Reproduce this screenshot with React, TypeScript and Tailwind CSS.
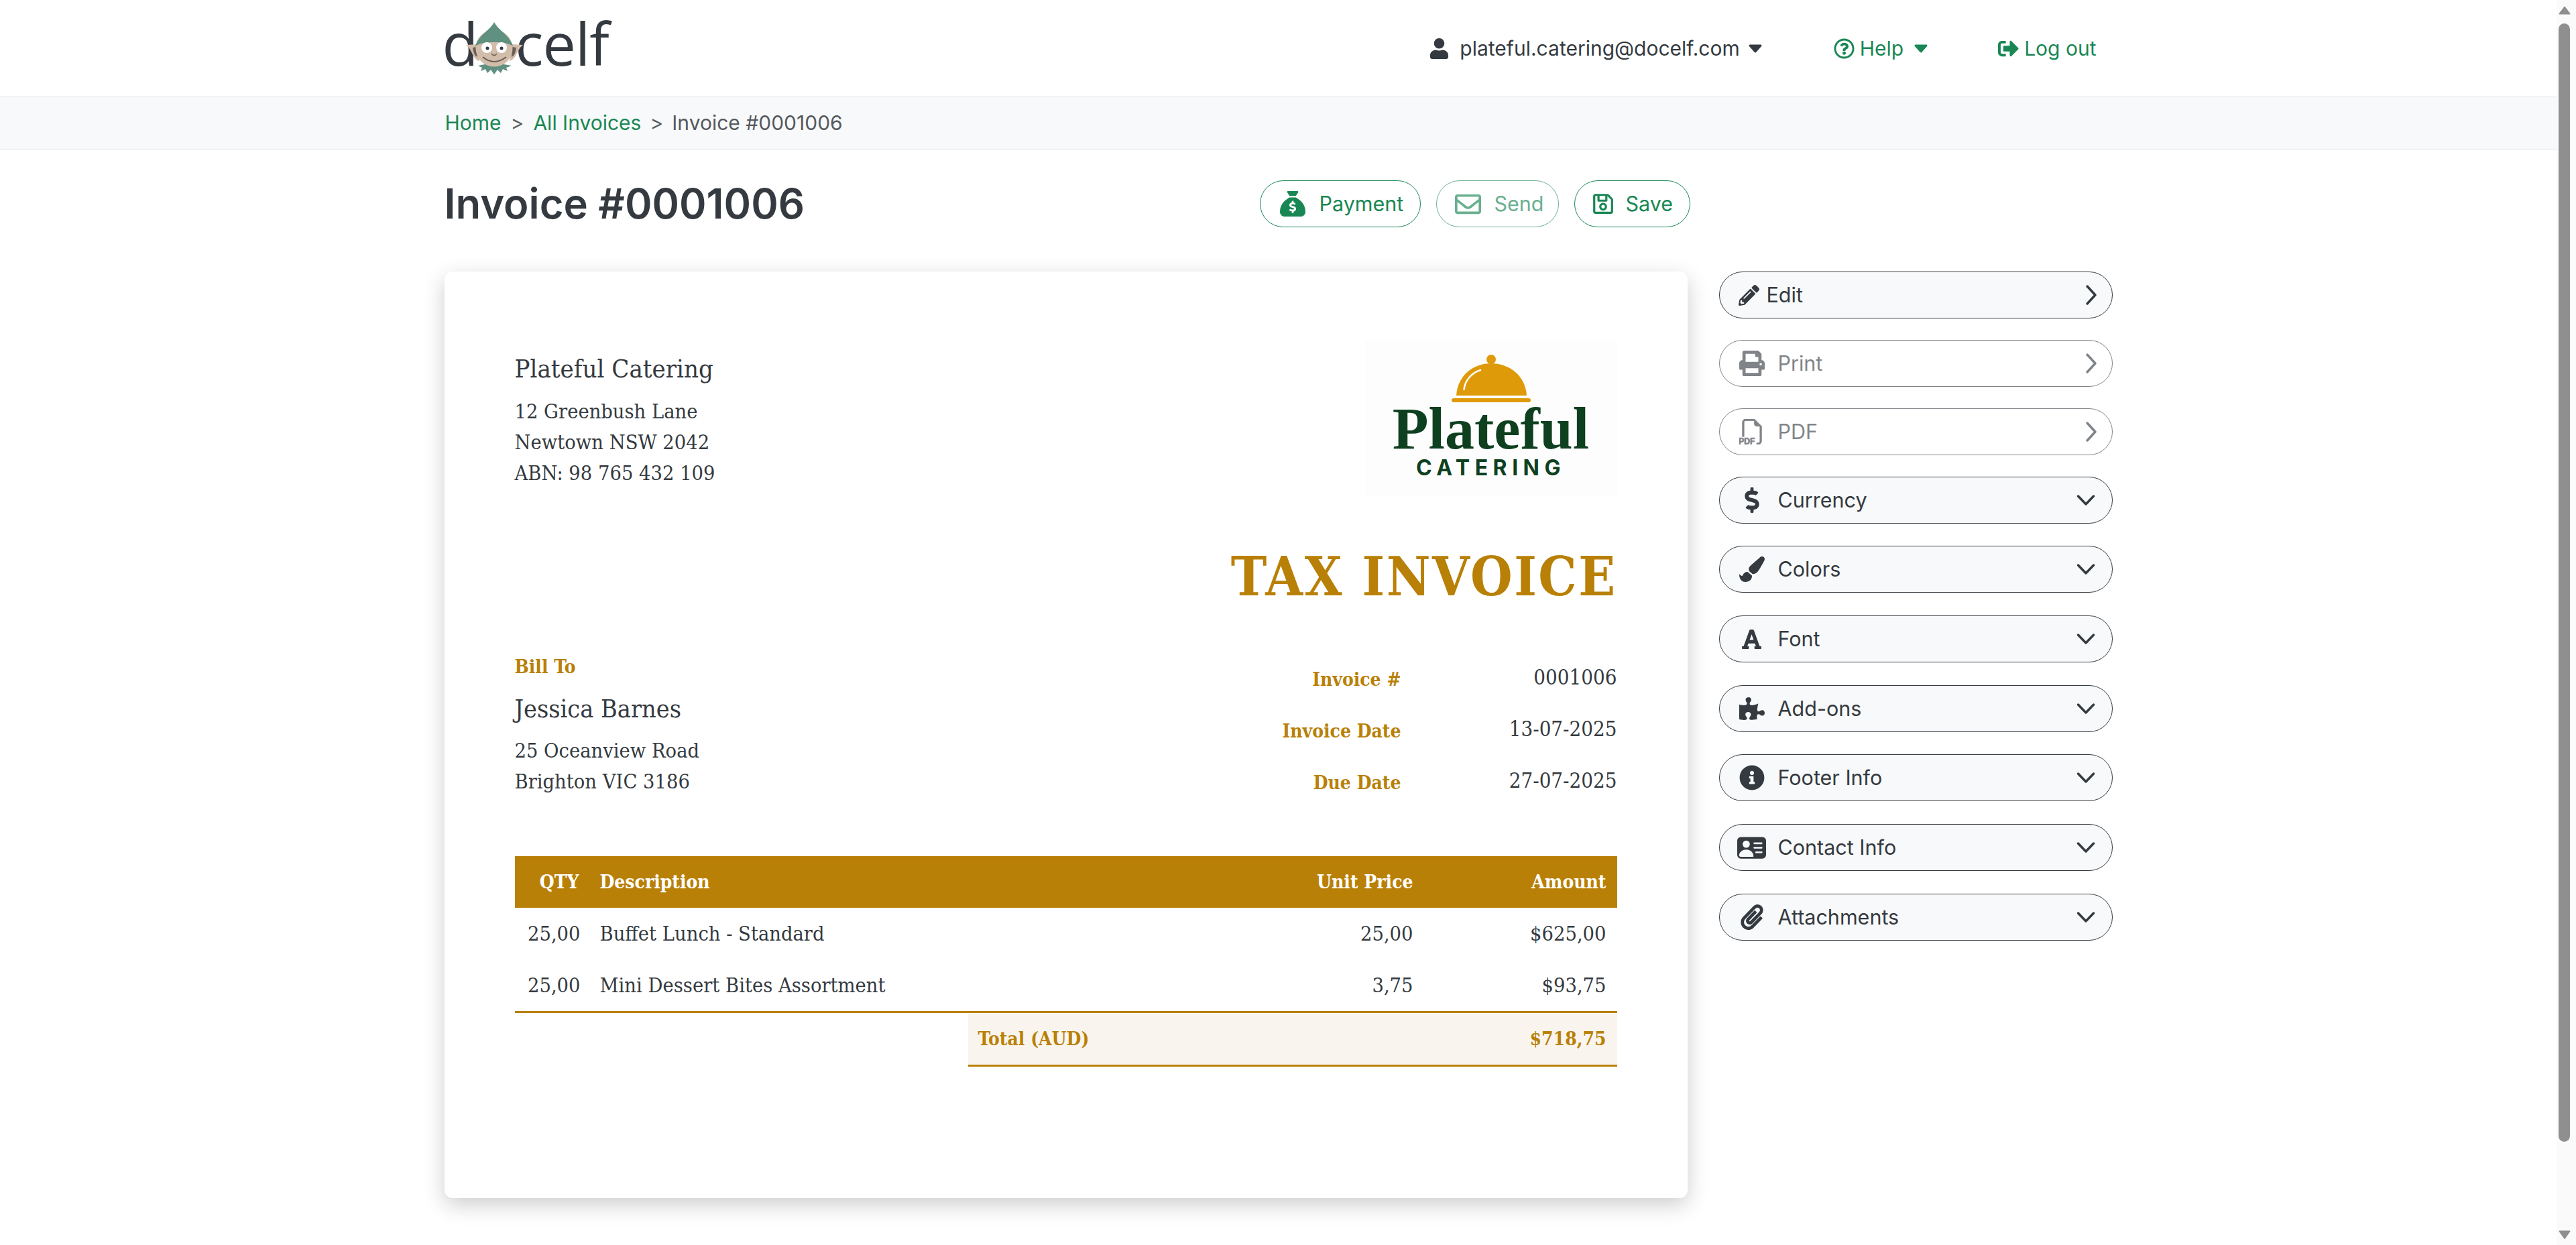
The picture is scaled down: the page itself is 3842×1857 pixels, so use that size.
import React from "react";
import { FaUser, FaRegQuestionCircle, FaSignOutAlt, FaRegEnvelope, FaRegSave, FaPencilAlt, FaPrint, FaDollarSign, FaPaintBrush, FaFont, FaPuzzlePiece, FaInfoCircle, FaPaperclip } from "react-icons/fa";
import { FaSackDollar } from "react-icons/fa6";
import { BsFiletypePdf, BsPersonVcardFill } from "react-icons/bs";

const Caret = () => (
  <svg width="20" height="13" viewBox="0 0 20 13" className="shrink-0">
    <path d="M2 2 L18 2 L10 11 Z" fill="currentColor" stroke="currentColor" strokeWidth="3" strokeLinejoin="round" />
  </svg>
);

const Elf = () => (
  <svg width="85" height="78" viewBox="0 0 85 78" className="relative z-10 -ml-[17px] -mr-[12px] shrink-0 self-start mt-[33px]">
    <path d="M18 65 L28 63 L57 63 L68 65 L60 68 L62 73 L55 70 L52 76 L47 71 L42 78 L37 71 L32 76 L29 70 L22 73 L24 68Z" fill="#5f9080" />
    <path d="M0 34 L20 33 L20 58 C10 56 9 40 0 34Z" fill="#d2bcaa" />
    <path d="M85 34 L65 33 L65 58 C75 56 76 40 85 34Z" fill="#d2bcaa" />
    <path d="M10 38 L16 37 L17 52 C12 50 11 44 10 38Z" fill="#6b5f55" />
    <path d="M75 38 L69 37 L68 52 C73 50 74 44 75 38Z" fill="#6b5f55" />
    <circle cx="42" cy="39" r="27.5" fill="#d2bcaa" />
    <path d="M42 0 C36 12 18 20 14 36 C22 28 62 28 70 36 C66 20 48 12 42 0 Z" fill="#5f9080" />
    <circle cx="31" cy="38" r="8" fill="#fff" />
    <circle cx="53" cy="38" r="8" fill="#fff" />
    <circle cx="32" cy="39" r="2.5" fill="#343a40" />
    <circle cx="53" cy="39" r="2.5" fill="#343a40" />
    <path d="M38 47 Q42 52 46 47" fill="none" stroke="#6b5f55" strokeWidth="1.5" />
    <path d="M25 52 Q42 66 60 52" fill="none" stroke="#6b5f55" strokeWidth="2" />
  </svg>
);

const Cloche = () => (
  <svg width="118" height="71" viewBox="0 0 118 71" className="block">
    <circle cx="59" cy="7" r="7" fill="#df9a0a" />
    <path d="M7 61 C9 30 33 13 59 13 C85 13 110 30 112 61 Z" fill="#df9a0a" />
    <rect x="0" y="65" width="118" height="6" rx="3" fill="#df9a0a" />
    <path d="M18.5 52 C20 38 30 27 43 23" fill="none" stroke="#fff" strokeWidth="2.5" strokeLinecap="round" />
  </svg>
);

const ChevronRight = () => (
  <svg width="18" height="32" viewBox="0 0 18 32" className="mr-[2px]">
    <path d="M3 3 L15 16 L3 29" fill="none" stroke="currentColor" strokeWidth="3.5" strokeLinecap="round" strokeLinejoin="round" />
  </svg>
);
const ChevronDown = () => (
  <svg width="28" height="18" viewBox="0 0 28 18" className="mr-[5px]">
    <path d="M2.5 3 L14 15 L25.5 3" fill="none" stroke="currentColor" strokeWidth="3.5" strokeLinecap="round" strokeLinejoin="round" />
  </svg>
);

type Side = { label: string; icon: React.ReactNode; kind: "right" | "down"; disabled?: boolean; narrow?: boolean; gap: string };
const side: Side[] = [
  { label: "Edit", icon: <FaPencilAlt size={31} />, kind: "right", narrow: true, gap: "mb-[32px]" },
  { label: "Print", icon: <FaPrint size={38} />, kind: "right", disabled: true, gap: "mb-[32px]" },
  { label: "PDF", icon: <BsFiletypePdf size={38} stroke="currentColor" strokeWidth={0.35} />, kind: "right", disabled: true, gap: "mb-[32px]" },
  { label: "Currency", icon: <FaDollarSign size={38} />, kind: "down", gap: "mb-[33px]" },
  { label: "Colors", icon: <FaPaintBrush size={38} />, kind: "down", gap: "mb-[34px]" },
  { label: "Font", icon: <FaFont size={33} />, kind: "down", gap: "mb-[34px]" },
  { label: "Add-ons", icon: <FaPuzzlePiece size={38} />, kind: "down", gap: "mb-[33px]" },
  { label: "Footer Info", icon: <FaInfoCircle size={38} />, kind: "down", gap: "mb-[34px]" },
  { label: "Contact Info", icon: <BsPersonVcardFill size={43} />, kind: "down", gap: "mb-[34px]" },
  { label: "Attachments", icon: <FaPaperclip size={38} />, kind: "down", gap: "" },
];

const serif = "font-['DejaVu_Serif_Condensed','DejaVu_Serif',serif]";

export default function App() {
  return (
    <div className="flex h-screen w-screen overflow-hidden bg-white text-[#343a40] font-['Inter',sans-serif]">
      <div className="flex-1 min-w-0">
        <header className="h-[145px] border-b border-[#dfe2e6]">
          <div className="mx-auto flex h-full w-[2488px] items-start justify-between">
            <div className="-ml-[3px] flex items-start text-[88px] font-medium leading-[88px] font-['Open_Sans',sans-serif] tracking-[-1px]">
              <span className="mt-[20px]">d</span>
              <Elf />
              <span className="mt-[20px]">celf</span>
            </div>
            <nav className="flex h-[144px] items-center pr-[24px] text-[30px]">
              <FaUser className="mr-[15px]" size={31} />
              <span>plateful.catering@docelf.com</span>
              <span className="ml-[13px]"><Caret /></span>
              <span className="ml-[107px] flex items-center text-[#198754]">
                <FaRegQuestionCircle className="mr-[8px]" size={31} />
                <span>Help</span>
                <span className="ml-[16px]"><Caret /></span>
              </span>
              <span className="ml-[105px] flex items-center text-[#198754]">
                <FaSignOutAlt className="mr-[8px]" size={31} />
                <span>Log out</span>
              </span>
            </nav>
          </div>
        </header>

        <div className="h-[78px] border-b border-[#dfe2e6] bg-[#f8f9fa]">
          <div className="mx-auto flex h-full w-[2488px] items-center pl-[1px] text-[30px]">
            <span className="text-[#198754]">Home</span>
            <span className="mx-[14px] text-[#5c5f63]">&gt;</span>
            <span className="text-[#198754]">All Invoices</span>
            <span className="mx-[13px] text-[#5c5f63]">&gt;</span>
            <span className="text-[#55595e]">Invoice #0001006</span>
          </div>
        </div>

        <div className="mx-auto w-[2488px]">
          <div className="flex h-[182px] w-[1858px] items-center justify-between pb-[20px]">
            <h1 className="text-[61.5px] font-semibold leading-none">Invoice #0001006</h1>
            <div className="flex items-center gap-[23px] text-[30.5px] text-[#198754]">
              <button className="flex h-[70px] w-[240px] items-center rounded-full border border-[#198754] pl-[29px]">
                <FaSackDollar size={38} className="mr-[21px]" />
                <span>Payment</span>
              </button>
              <button className="flex h-[70px] w-[183px] items-center rounded-full border border-[#198754] pl-[27px] opacity-65">
                <FaRegEnvelope size={39} className="mr-[20px]" />
                <span>Send</span>
              </button>
              <button className="flex h-[70px] w-[173px] items-center rounded-full border border-[#198754] pl-[25px]">
                <FaRegSave size={34} className="mr-[17px]" />
                <span>Save</span>
              </button>
            </div>
          </div>

          <div className="flex items-start">
            <main className={`h-[1382px] w-[1854px] rounded-[12px] bg-white px-[105px] pt-[104px] shadow-[0_10px_32px_rgba(0,0,0,0.2)] ${serif}`}>
              <div className="flex items-start justify-between">
                <div className="pt-[18px]">
                  <div className="text-[38px] leading-[46px]">Plateful Catering</div>
                  <div className="mt-[18px] text-[30.5px] leading-[46px]">
                    <div>12 Greenbush Lane</div>
                    <div>Newtown NSW 2042</div>
                    <div>ABN: 98 765 432 109</div>
                  </div>
                </div>
                <div className="flex h-[231px] w-[376px] flex-col items-center bg-[#fdfdfd] pt-[20px]">
                  <Cloche />
                  <div className="font-['Liberation_Serif',serif] mt-[2px] text-[88px] font-bold leading-[76px] text-[#0e4020]">Plateful</div>
                  <div className="font-['Inter',sans-serif] text-[32px] font-bold leading-[40px] tracking-[7.5px] text-[#0e4020]">CATERING</div>
                </div>
              </div>

              <div className="mt-[72px] text-right text-[80px] font-bold leading-[96px] tracking-[2.5px] text-[#b98007]">TAX INVOICE</div>

              <div className="mt-[67px] flex items-start justify-between">
                <div>
                  <div className="text-[28px] font-bold leading-[40px] text-[#b98007]">Bill To</div>
                  <div className="mt-[19px] text-[37.5px] leading-[46px]">Jessica Barnes</div>
                  <div className="mt-[17px] text-[30.5px] leading-[46px]">
                    <div>25 Oceanview Road</div>
                    <div>Brighton VIC 3186</div>
                  </div>
                </div>
                <div className="grid w-[500px] grid-cols-[178px_1fr] gap-y-[36px] pt-[18px] text-[28px] leading-[41px]">
                  <div className="text-right font-bold text-[#b98007]">Invoice #</div>
                  <div className="-mt-[3px] text-right text-[31px]">0001006</div>
                  <div className="whitespace-nowrap text-right font-bold text-[#b98007]">Invoice Date</div>
                  <div className="-mt-[3px] text-right text-[31px]">13-07-2025</div>
                  <div className="text-right font-bold text-[#b98007]">Due Date</div>
                  <div className="-mt-[3px] text-right text-[31px]">27-07-2025</div>
                </div>
              </div>

              <table className="mt-[88px] w-full table-fixed border-collapse text-[30.5px]">
                <colgroup>
                  <col className="w-[113px]" />
                  <col />
                  <col className="w-[300px]" />
                  <col className="w-[289px]" />
                </colgroup>
                <thead>
                  <tr className="h-[77px] bg-[#b98007] text-[28px] text-white">
                    <th className="pr-[17px] text-right font-bold">QTY</th>
                    <th className="pl-[14px] text-left font-bold">Description</th>
                    <th className="pr-[15px] text-right font-bold">Unit Price</th>
                    <th className="pr-[16px] text-right font-bold">Amount</th>
                  </tr>
                </thead>
                <tbody>
                  <tr className="h-[77px]">
                    <td className="pr-[15px] text-right">25,00</td>
                    <td className="pl-[14px]">Buffet Lunch - Standard</td>
                    <td className="pr-[15px] text-right">25,00</td>
                    <td className="pr-[16px] text-right">$625,00</td>
                  </tr>
                  <tr className="h-[77px]">
                    <td className="pr-[15px] text-right">25,00</td>
                    <td className="pl-[14px]">Mini Dessert Bites Assortment</td>
                    <td className="pr-[15px] text-right">3,75</td>
                    <td className="pr-[16px] text-right">$93,75</td>
                  </tr>
                </tbody>
              </table>
              <div className="h-[3px] bg-[#b98007]" />
              <div className="ml-auto flex h-[80px] w-[968px] items-center justify-between border-b-[3px] border-[#b98007] bg-[#f9f5ee] pl-[15px] pr-[16px] text-[28px] font-bold text-[#b98007]">
                <span>Total (AUD)</span>
                <span>$718,75</span>
              </div>
            </main>

            <aside className="ml-[47px] w-[587px]">
              {side.map((s) => (
                <div
                  key={s.label}
                  className={`flex h-[70px] items-center justify-between rounded-full border pr-[20px] text-[30.5px] ${s.gap} ${s.disabled ? "border-[#808488] bg-white text-[#808488]" : "border-[#343a40] bg-[#f8f9fa] text-[#343a40]"}`}
                >
                  <div className="flex items-center">
                    <span className={`flex items-center justify-center ${s.narrow ? "ml-[26px] w-[36px]" : "ml-[26px] mr-[17px] w-[44px]"}`}>{s.icon}</span>
                    <span className={s.narrow ? "ml-[8px]" : ""}>{s.label}</span>
                  </div>
                  {s.kind === "right" ? <ChevronRight /> : <ChevronDown />}
                </div>
              ))}
            </aside>
          </div>
        </div>
      </div>

      <div className="flex h-full w-[29px] shrink-0 flex-col items-center bg-[#fafafa] pr-[6px]">
        <svg width="18" height="13" viewBox="0 0 18 13" className="mt-[9px]">
          <path d="M9 1.5 L16.5 11.5 L1.5 11.5 Z" fill="#8f8f8f" stroke="#8f8f8f" strokeWidth="2" strokeLinejoin="round" />
        </svg>
        <div className="mt-[13px] h-[1668px] w-[17px] rounded-full bg-[#8f8f8f]" />
        <svg width="18" height="14" viewBox="0 0 18 14" className="mt-[132px]">
          <path d="M1.5 1.5 L16.5 1.5 L9 12 Z" fill="#8f8f8f" stroke="#8f8f8f" strokeWidth="2" strokeLinejoin="round" />
        </svg>
      </div>
    </div>
  );
}
